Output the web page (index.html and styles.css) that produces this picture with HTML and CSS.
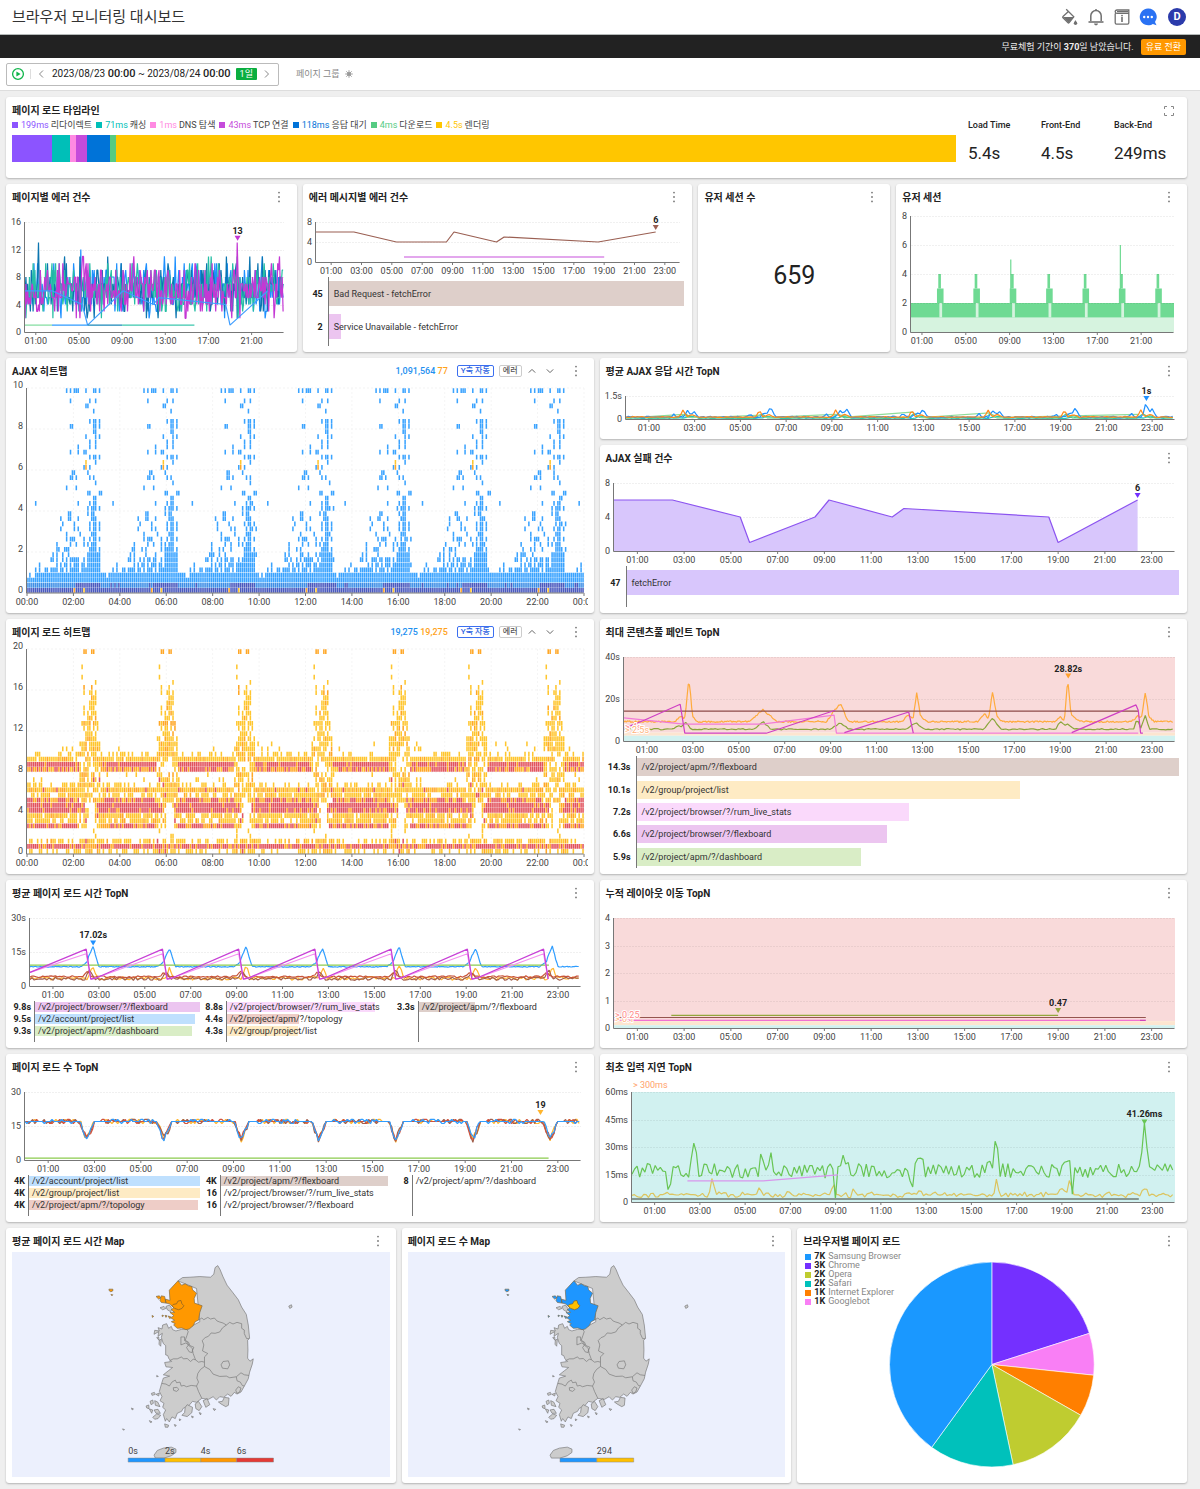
FILE: index.html
```html
<!DOCTYPE html>
<html lang="ko">
<head>
<meta charset="utf-8">
<meta name="viewport" content="width=device-width, initial-scale=1">
<title>브라우저 모니터링 대시보드</title>
<link rel="stylesheet" href="styles.css">
</head>
<body>
<svg class="defs" aria-hidden="true">
  <symbol id="kebab" viewBox="0 0 12 12"><circle cx="6" cy="1.6" r="0.9"/><circle cx="6" cy="6" r="0.9"/><circle cx="6" cy="10.4" r="0.9"/></symbol>
  <symbol id="up" viewBox="0 0 10 10"><path d="M1.8 6.6 5 3.4l3.2 3.2" fill="none" stroke="#666"/></symbol>
  <symbol id="down" viewBox="0 0 10 10"><path d="M1.8 3.4 5 6.6l3.2-3.2" fill="none" stroke="#666"/></symbol>
  <symbol id="korea" viewBox="36 80 1134 678">
    <g class="land">
      <path d="M534 167 548 157 570 156 600 154 632 156 642 147 646 127 654 121 661 133 670 155 682 180 700 203 716 224 726 246 740 268 746 300 750 340 744 346 745 375 744 400 751 409 761 402 758 418 750 442 746 462 733 486 724 502 712 508 704 503 694 515 684 508 672 518 660 516 650 526 640 516 626 524 606 521 590 533 578 530 566 544 550 551 545 560 532 566 526 582 516 577 508 592 500 582 496 590 490 570 497 556 488 548 492 536 480 528 486 516 478 500 485 476 490 460 509 454 490 450 505 438 518 428 498 426 494 413 515 410 507 402 503 392 497 390 497 362 490 356 484 338 487 325 474 334 476 320 462 328 464 316 478 318 474 308 486 312 488 300 500 296 506 310 514 304 518 314 528 318 545 313 560 312 600 290 590 190Z"/>
      <path d="M478 345 484 343 482 364 477 358ZM470 338 476 336 477 346ZM480 248 492 244 498 250 488 254ZM498 244 508 240 516 250 512 260 502 254ZM458 578 470 568 482 572 474 582 464 584ZM556 548 562 540 578 548 576 564 562 576 546 572 554 564ZM586 538 596 530 606 546 598 558 588 552ZM610 528 622 522 630 540 618 548ZM656 532 668 530 674 518 688 520 686 542 678 546 664 538ZM640 552 648 554 644 558ZM598 564 604 566 602 571ZM575 574 581 577 577 580ZM538 583 543 585 539 589ZM523 600 529 602 526 606ZM494 598 506 602 504 608 496 608ZM448 588 456 592 451 594ZM394 550 400 553 396 556ZM367 613 373 615 370 617ZM470 452 475 455 470 456ZM868 243 876 239 878 246 871 250ZM454 506 463 503 466 509 456 512ZM468 509 478 505 476 514ZM450 530 458 526 460 536 453 540ZM438 544 446 541 447 552 440 550ZM464 528 473 532 480 546 466 542ZM448 553 458 556 455 566ZM462 556 474 554 481 566 468 566Z"/>
      <path d="M462 692 472 678 490 671 514 668 528 674 528 684 514 694 492 701 466 701Z"/>
    </g>
    <path class="borders" d="M596 285 606 279 612 284 624 277 632 282 644 279 652 288 660 291 670 294 680 300 690 292 700 297 712 292 726 296 726 310 734 315 734 326 741 341 749 341M680 300 668 309 660 321 646 325 634 324 626 334 616 338 607 347 612 360 608 378 624 386 614 396 614 412 606 410 596 412 587 405 580 403 572 410 562 401 550 402 545 396 532 402 520 402 508 408M560 312 565 320 561 332 556 346 566 352 570 362 582 367 578 376 580 386 587 405M543 336 554 336 554 347 562 352 566 360 560 368 568 381 577 383 578 372 570 364 558 354 543 360ZM614 412 614 425 602 434 594 446 591 460 596 472 590 484 596 500 606 521M614 425 630 434 640 448 660 455 680 454 690 459 710 456 724 444 734 450 748 452M710 456 712 468 722 472 728 482 734 484M590 484 574 482 560 486 552 482 544 484 540 472 530 474 526 466 516 472 508 484 498 478 485 476M670 410 686 408 690 420 684 432 668 430 664 420ZM520 489 531 488 537 494 530 500 521 497ZM708 496 716 486 724 490 720 502 712 506Z"/>
    <path class="metro" d="M534 167 545 180 556 176 566 182 576 184 578 194 590 204 583 220 584 234 607 242 600 262 596 285 586 290 580 302 568 312 558 314 546 309 532 310 521 300 526 296 514 290 524 286 512 278 522 272 510 262 524 262 514 254 522 248 508 236 498 234 496 222 510 226 508 195ZM468 214 478 212 482 218 476 222ZM484 212 494 214 498 234 484 232 480 226ZM495 271 501 272 498 277ZM504 273 512 275 510 281ZM486 270 491 272 487 275ZM456 271 461 274 457 277ZM326 192 338 192 338 197 332 200 327 197ZM332 208 338 209 335 212Z"/>
    <path class="seoul" d="M520 238 530 236 534 228 543 226 546 236 552 242 546 250 536 254 524 250 516 242Z"/>
  </symbol>
</svg>

<header class="topbar">
  <h1>브라우저 모니터링 대시보드</h1>
  <nav class="topbar-tools" aria-label="도구">
    <button type="button" aria-label="테마"><svg viewBox="0 0 18 18"><path d="M5.2 1.2 12.8 8.8 8.2 14.6a1 1 0 0 1-1.4 0L2 9.8a1 1 0 0 1 0-1.4L7.4 3.5" fill="none" stroke="#707070" stroke-width="1.3"/><path d="M1.9 9h10.9L7.5 15Z" fill="#707070"/><path d="M14.4 12.2s1.8 2 1.8 3a1.7 1.7 0 0 1-3.4 0c0-1 1.6-3 1.6-3Z" fill="#707070"/></svg></button>
    <button type="button" aria-label="알림"><svg viewBox="0 0 18 18"><path d="M9 1v1.5M3.8 13V7.8a5.2 5.2 0 0 1 10.4 0V13" fill="none" stroke="#707070" stroke-width="1.5"/><path d="M1.5 14h15" stroke="#707070" stroke-width="1.6"/><path d="M7 15.6h4a2 1.8 0 0 1-4 0Z" fill="#707070"/></svg></button>
    <button type="button" aria-label="릴리스 노트"><svg viewBox="0 0 18 18"><path d="M2.2 5.5v9.3c0 .8.5 1.3 1.3 1.3h11c.8 0 1.3-.5 1.3-1.3V2H4C2.800 2 2.200 2.700 2.200 3.700S2.800 5.300 4 5.300h11.500M4 3.600h11" fill="none" stroke="#707070" stroke-width="1.3"/><path d="M9 9v5" stroke="#707070" stroke-width="1.600"/><circle cx="9" cy="7.600" r="0.900" fill="#707070"/></svg></button>
    <button type="button" aria-label="문의"><svg viewBox="0 0 18 18"><path d="M9 .5a8.400 8.400 0 1 0 4.800 15.400l3.700 1.400-1.500-3.400A8.400 8.400 0 0 0 9 .5Z" fill="#2a72f3"/><circle cx="5.200" cy="9" r="1.200" fill="#fff"/><circle cx="9" cy="9" r="1.200" fill="#fff"/><circle cx="12.800" cy="9" r="1.200" fill="#fff"/></svg></button>
    <button type="button" class="avatar">D</button>
  </nav>
</header>

<div class="notice">
  <p>무료체험 기간이 <b>370</b>일 남았습니다.</p>
  <button type="button">유료 전환</button>
</div>

<div class="toolbar">
  <div class="range">
    <button type="button" aria-label="실시간"><svg class="play" viewBox="0 0 14 14"><circle cx="7" cy="7" r="5.400" fill="none" stroke="#0fb54a" stroke-width="1.300"/><path d="M5.400 4.600 9.600 7l-4.200 2.400Z" fill="#0fb54a"/></svg></button>
    <span class="divider"></span>
    <button type="button" aria-label="이전"><svg class="step" viewBox="0 0 10 10"><path d="M7 1.500 3.500 5 7 8.500" fill="none" stroke="#888"/></svg></button>
    <span class="dates">2023/08/23 <b>00<i>:</i>00</b> ~ 2023/08/24 <b>00<i>:</i>00</b></span>
    <span class="span-badge">1일</span>
    <button type="button" aria-label="다음"><svg class="step" viewBox="0 0 10 10"><path d="M3 1.500 6.500 5 3 8.500" fill="none" stroke="#888"/></svg></button>
  </div>
  <button type="button" class="group-filter">페이지 그룹 <svg viewBox="0 0 10 10"><circle cx="5" cy="5" r="2" fill="#999"/><path d="M5 1.200v7.600M1.200 5h7.600M2.300 2.300l5.400 5.400M7.700 2.300 2.300 7.700" stroke="#999" stroke-width=".9"/></svg></button>
</div>

<main class="dashboard">
  <section class="panel w12 h1 timeline">
    <div class="timeline-main">
      <h2>페이지 로드 타임라인</h2>
      <ul class="timeline-legend">
        <li class="c-redirect"><b>199ms</b> 리다이렉트</li>
        <li class="c-cache"><b>71ms</b> 캐싱</li>
        <li class="c-dns"><b>1ms</b> DNS 탐색</li>
        <li class="c-tcp"><b>43ms</b> TCP 연결</li>
        <li class="c-wait"><b>118ms</b> 응답 대기</li>
        <li class="c-download"><b>4ms</b> 다운로드</li>
        <li class="c-render"><b>4.5s</b> 렌더링</li>
      </ul>
      <div class="timeline-bar">
        <span class="c-redirect" style="flex-grow:40"></span><span class="c-cache" style="flex-grow:18"></span><span class="c-dns" style="flex-grow:6"></span><span class="c-tcp" style="flex-grow:11"></span><span class="c-wait" style="flex-grow:23"></span><span class="c-download" style="flex-grow:6"></span><span class="c-render" style="flex-grow:839"></span>
      </div>
    </div>
    <dl class="stats">
      <div><dt>Load Time</dt><dd>5.4s</dd></div>
      <div><dt>Front-End</dt><dd>4.5s</dd></div>
      <div><dt>Back-End</dt><dd>249ms</dd></div>
    </dl>
    <button type="button" class="expand" aria-label="전체 화면"><svg viewBox="0 0 10 10"><path d="M.5 3V.5H3M7 .5h2.500V3M9.500 7v2.500H7M3 9.500H.5V7" fill="none" stroke="#888"/></svg></button>
  </section>

  <section class="panel w3 h2">
    <header><h2>페이지별 에러 건수</h2><button type="button" class="menu" aria-label="메뉴"><svg><use href="#kebab"/></svg></button></header>
    <div class="chart" data-chart="pageErrors"></div>
  </section>

  <section class="panel w4 h2">
    <header><h2>에러 메시지별 에러 건수</h2><button type="button" class="menu" aria-label="메뉴"><svg><use href="#kebab"/></svg></button></header>
    <div class="chart chart-short" data-chart="errorMessages"></div>
    <ul class="toplist toplist-large label-25">
      <li><b>45</b><div><span class="bar t-brown" style="width:100%"></span><span class="name">Bad Request - fetchError</span></div></li>
      <li><b>2</b><div><span class="bar t-purple" style="width:3.500%"></span><span class="name">Service Unavailable - fetchError</span></div></li>
    </ul>
  </section>

  <section class="panel w2 h2">
    <header><h2>유저 세션 수</h2><button type="button" class="menu" aria-label="메뉴"><svg><use href="#kebab"/></svg></button></header>
    <p class="big-number">659</p>
  </section>

  <section class="panel w3 h2">
    <header><h2>유저 세션</h2><button type="button" class="menu" aria-label="메뉴"><svg><use href="#kebab"/></svg></button></header>
    <div class="chart" data-chart="sessions"></div>
  </section>

  <section class="panel w6 h3">
    <header><h2>AJAX 히트맵</h2>
      <div class="heat-tools"><span class="hits">1,091,564 <em>77</em></span><button type="button" class="toggle on">Y축 자동</button><button type="button" class="toggle">에러</button><button type="button" class="arrow" aria-label="위로"><svg><use href="#up"/></svg></button><button type="button" class="arrow" aria-label="아래로"><svg><use href="#down"/></svg></button></div>
      <button type="button" class="menu" aria-label="메뉴"><svg><use href="#kebab"/></svg></button></header>
    <div class="chart chart-heat" data-chart="ajaxHeat"></div>
  </section>

  <section class="panel w6 h1">
    <header><h2>평균 AJAX 응답 시간 TopN</h2><button type="button" class="menu" aria-label="메뉴"><svg><use href="#kebab"/></svg></button></header>
    <div class="chart" data-chart="ajaxTime"></div>
  </section>

  <section class="panel w6 h2">
    <header><h2>AJAX 실패 건수</h2><button type="button" class="menu" aria-label="메뉴"><svg><use href="#kebab"/></svg></button></header>
    <div class="chart chart-mid" data-chart="ajaxFail"></div>
    <ul class="toplist toplist-large label-26">
      <li><b>47</b><div><span class="bar t-violet" style="width:100%"></span><span class="name">fetchError</span></div></li>
    </ul>
  </section>

  <section class="panel w6 h3">
    <header><h2>페이지 로드 히트맵</h2>
      <div class="heat-tools"><span class="hits">19,275 <em>19,275</em></span><button type="button" class="toggle on">Y축 자동</button><button type="button" class="toggle">에러</button><button type="button" class="arrow" aria-label="위로"><svg><use href="#up"/></svg></button><button type="button" class="arrow" aria-label="아래로"><svg><use href="#down"/></svg></button></div>
      <button type="button" class="menu" aria-label="메뉴"><svg><use href="#kebab"/></svg></button></header>
    <div class="chart chart-heat" data-chart="loadHeat"></div>
  </section>

  <section class="panel w6 h3">
    <header><h2>최대 콘텐츠풀 페인트 TopN</h2><button type="button" class="menu" aria-label="메뉴"><svg><use href="#kebab"/></svg></button></header>
    <div class="chart chart-tall" data-chart="lcp"></div>
    <ul class="toplist toplist-medium label-36">
      <li><b>14.3s</b><div><span class="bar t-brown" style="width:100%"></span><span class="name">/v2/project/apm/?/flexboard</span></div></li>
      <li><b>10.1s</b><div><span class="bar t-yellow" style="width:70.600%"></span><span class="name">/v2/group/project/list</span></div></li>
      <li><b>7.2s</b><div><span class="bar t-pink" style="width:50.200%"></span><span class="name">/v2/project/browser/?/rum_live_stats</span></div></li>
      <li><b>6.6s</b><div><span class="bar t-purple" style="width:46.100%"></span><span class="name">/v2/project/browser/?/flexboard</span></div></li>
      <li><b>5.9s</b><div><span class="bar t-green" style="width:41.400%"></span><span class="name">/v2/project/apm/?/dashboard</span></div></li>
    </ul>
  </section>

  <section class="panel w6 h2">
    <header><h2>평균 페이지 로드 시간 TopN</h2><button type="button" class="menu" aria-label="메뉴"><svg><use href="#kebab"/></svg></button></header>
    <div class="chart chart-mid" data-chart="loadTime"></div>
    <div class="toplist-columns">
      <ul class="toplist label-22">
        <li><b>9.8s</b><div><span class="bar t-purple" style="width:100%"></span><span class="name">/v2/project/browser/?/flexboard</span></div></li>
        <li><b>9.5s</b><div><span class="bar t-blue" style="width:97%"></span><span class="name">/v2/account/project/list</span></div></li>
        <li><b>9.3s</b><div><span class="bar t-green" style="width:95%"></span><span class="name">/v2/project/apm/?/dashboard</span></div></li>
      </ul>
      <ul class="toplist label-22">
        <li><b>8.8s</b><div><span class="bar t-pink" style="width:90%"></span><span class="name">/v2/project/browser/?/rum_live_stats</span></div></li>
        <li><b>4.4s</b><div><span class="bar t-red" style="width:44%"></span><span class="name">/v2/project/apm/?/topology</span></div></li>
        <li><b>4.3s</b><div><span class="bar t-yellow" style="width:43%"></span><span class="name">/v2/group/project/list</span></div></li>
      </ul>
      <ul class="toplist label-22">
        <li><b>3.3s</b><div><span class="bar t-brown" style="width:34%"></span><span class="name">/v2/project/apm/?/flexboard</span></div></li>
      </ul>
    </div>
  </section>

  <section class="panel w6 h2">
    <header><h2>누적 레이아웃 이동 TopN</h2><button type="button" class="menu" aria-label="메뉴"><svg><use href="#kebab"/></svg></button></header>
    <div class="chart" data-chart="cls"></div>
  </section>

  <section class="panel w6 h2">
    <header><h2>페이지 로드 수 TopN</h2><button type="button" class="menu" aria-label="메뉴"><svg><use href="#kebab"/></svg></button></header>
    <div class="chart chart-mid" data-chart="loadCount"></div>
    <div class="toplist-columns">
      <ul class="toplist label-16">
        <li><b>4K</b><div><span class="bar t-blue" style="width:100%"></span><span class="name">/v2/account/project/list</span></div></li>
        <li><b>4K</b><div><span class="bar t-yellow" style="width:100%"></span><span class="name">/v2/group/project/list</span></div></li>
        <li><b>4K</b><div><span class="bar t-red" style="width:99%"></span><span class="name">/v2/project/apm/?/topology</span></div></li>
      </ul>
      <ul class="toplist label-16">
        <li><b>4K</b><div><span class="bar t-brown" style="width:98%"></span><span class="name">/v2/project/apm/?/flexboard</span></div></li>
        <li><b>16</b><div><span class="name">/v2/project/browser/?/rum_live_stats</span></div></li>
        <li><b>16</b><div><span class="name">/v2/project/browser/?/flexboard</span></div></li>
      </ul>
      <ul class="toplist label-16">
        <li><b>8</b><div><span class="name">/v2/project/apm/?/dashboard</span></div></li>
      </ul>
    </div>
  </section>

  <section class="panel w6 h2">
    <header><h2>최초 입력 지연 TopN</h2><button type="button" class="menu" aria-label="메뉴"><svg><use href="#kebab"/></svg></button></header>
    <div class="chart" data-chart="fid"></div>
  </section>

  <section class="panel w4 h3">
    <header><h2>평균 페이지 로드 시간 Map</h2><button type="button" class="menu" aria-label="메뉴"><svg><use href="#kebab"/></svg></button></header>
    <div class="map map-time"><svg viewBox="0 0 378 226" role="img" aria-label="지역별 평균 페이지 로드 시간">
      <use href="#korea" width="378" height="226"/>
      <g stroke="#888" stroke-width=".5"><path d="M116 207h37v4h-37z" fill="#1e96ff"/><path d="M153 207h36v4h-36z" fill="#ffc000"/><path d="M189 207h36v4h-36z" fill="#ff9800"/><path d="M225 207h37v4h-37z" fill="#e53935"/></g>
      <text x="116" y="203">0s</text><text x="153" y="203">2s</text><text x="189" y="203">4s</text><text x="225" y="203">6s</text>
    </svg></div>
  </section>

  <section class="panel w4 h3">
    <header><h2>페이지 로드 수 Map</h2><button type="button" class="menu" aria-label="메뉴"><svg><use href="#kebab"/></svg></button></header>
    <div class="map map-count"><svg viewBox="0 0 378 226" role="img" aria-label="지역별 페이지 로드 수">
      <use href="#korea" width="378" height="226"/>
      <g stroke="#888" stroke-width=".5"><path d="M152 207h37v4h-37z" fill="#1e96ff"/><path d="M189 207h37v4h-37z" fill="#ffc000"/></g>
      <text x="189" y="203">294</text>
    </svg></div>
  </section>

  <section class="panel w4 h3">
    <header><h2>브라우저별 페이지 로드</h2><button type="button" class="menu" aria-label="메뉴"><svg><use href="#kebab"/></svg></button></header>
    <div class="pie">
      <ul>
        <li class="p-blue"><b>7K</b> Samsung Browser</li>
        <li class="p-violet"><b>3K</b> Chrome</li>
        <li class="p-lime"><b>2K</b> Opera</li>
        <li class="p-teal"><b>2K</b> Safari</li>
        <li class="p-orange"><b>1K</b> Internet Explorer</li>
        <li class="p-pink"><b>1K</b> Googlebot</li>
      </ul>
      <svg viewBox="0 0 390 231" role="img" aria-label="브라우저별 페이지 로드" id="pie"></svg>
    </div>
  </section>
</main>
<script src="charts.js"></script>
</body>
</html>
```

FILE: styles.css
```css
* { box-sizing: border-box; }

body {
  margin: 0;
  background: #efefef;
  color: #222;
  font: 9px/12px Roboto, "Noto Sans CJK KR", sans-serif;
}

h1, h2, p, ul, dl, dd { margin: 0; padding: 0; }
ul { list-style: none; }
button { margin: 0; padding: 0; border: 0; background: none; color: inherit; font: inherit; cursor: pointer; }
svg { display: block; }
.defs { width: 0; height: 0; position: absolute; }

/* Top bar */
.topbar {
  display: flex;
  align-items: center;
  justify-content: space-between;
  height: 35px;
  padding: 0 14px 0 12px;
  background: #fff;
  border-bottom: 1px solid #b5bab9;
}
.topbar h1 { font-size: 15px; line-height: 20px; font-weight: 400; color: #333; }
.topbar-tools { display: flex; align-items: center; gap: 8px; }
.topbar-tools svg { width: 18px; height: 18px; }
.avatar {
  width: 18px;
  height: 18px;
  margin-left: 3px;
  border-radius: 50%;
  background: #2b3bab;
  color: #fff;
  font-size: 11px;
  font-weight: 700;
}

.notice {
  display: flex;
  align-items: center;
  justify-content: flex-end;
  gap: 7px;
  height: 23px;
  padding: 0 14px;
  background: #222;
  color: #eee;
}
.notice button { padding: 2px 5px; border-radius: 2px; background: #ff9800; color: #fff; }

.toolbar {
  display: flex;
  align-items: center;
  gap: 17px;
  height: 33px;
  padding: 0 6px;
  background: #fff;
  border-bottom: 1px solid #ddd;
}
.range {
  display: flex;
  align-items: center;
  gap: 5px;
  height: 23px;
  padding: 0 6px 0 4px;
  border: 1px solid #bbb;
  border-radius: 2px;
}
.play { width: 14px; height: 14px; }
.step { width: 10px; height: 10px; }
.divider { width: 1px; height: 10px; background: #ddd; }
.dates { padding-left: 1px; font-size: 10px; white-space: nowrap; }
.dates b { font-size: 11px; font-weight: 500; }
.dates i { font-style: normal; font-weight: 400; }
.span-badge { padding: 0 4px; border-radius: 1px; background: #0aae3f; color: #fff; }
.group-filter { display: flex; align-items: center; gap: 4px; color: #888; }
.group-filter svg { width: 10px; height: 10px; }

/* Dashboard grid */
.dashboard {
  display: grid;
  grid-template-columns: repeat(12, minmax(0, 1fr));
  grid-auto-rows: 81px;
  grid-auto-flow: dense;
  gap: 6px;
  padding: 6px 13px 6px 6px;
}
.w2 { grid-column: span 2; }
.w3 { grid-column: span 3; }
.w4 { grid-column: span 4; }
.w6 { grid-column: span 6; }
.w12 { grid-column: span 12; }
.h1 { grid-row: span 1; }
.h2 { grid-row: span 2; }
.h3 { grid-row: span 3; }

.panel {
  display: flex;
  flex-direction: column;
  min-width: 0;
  background: #fff;
  border-radius: 3px;
  box-shadow: 0 1px 2px rgba(0, 0, 0, .25);
}
.panel > header { display: flex; align-items: center; flex: none; height: 24px; padding: 2px 12px 0 6px; }
.panel h2 { flex: 1; padding-top: 1px; font-size: 10px; line-height: 12px; font-weight: 700; white-space: nowrap; }
.menu svg { width: 12px; height: 12px; fill: #777; }

/* Page load timeline */
.panel.timeline { flex-direction: row; position: relative; }
.timeline-main { flex: 1; padding: 7px 12px 0 6px; }
.timeline-legend { display: flex; gap: 4px; margin-top: 2px; }
.timeline-legend li { display: flex; align-items: center; gap: 2px; color: #444; white-space: nowrap; }
.timeline-legend li::before { content: ""; width: 6px; height: 6px; margin-right: 1px; background: var(--c); }
.timeline-legend b { color: var(--c); font-weight: 400; }
.timeline-bar { display: flex; height: 27px; margin-top: 4px; }
.timeline-bar span { background: var(--c); }
.c-redirect { --c: #8c54ff; }
.c-cache { --c: #00bfb8; }
.c-dns { --c: #ff8ae2; }
.c-tcp { --c: #c54bdb; }
.c-wait { --c: #0073d8; }
.c-download { --c: #56cb83; }
.c-render { --c: #ffc600; }
.stats { display: grid; grid-template-columns: repeat(3, 73px); padding-top: 22px; }
.stats dt { font-weight: 500; }
.stats dd { margin-top: 12px; font-size: 17px; line-height: 20px; }
.expand { position: absolute; top: 9px; right: 13px; }
.expand svg { width: 10px; height: 10px; }

/* Charts */
.chart { flex: 1; min-height: 0; overflow: hidden; }
.chart-short { flex: none; height: 69px; }
.chart-mid { flex: none; height: 97px; }
.chart-tall { flex: none; height: 113px; }
.chart-heat { margin-right: 6px; overflow-x: clip; overflow-y: visible; }
.chart-heat svg { overflow: visible; }
.chart text { font-size: 9px; fill: #444; }
.chart .peak { font-weight: 700; fill: #222; }
.chart .limit { stroke: #fff; stroke-width: 2px; paint-order: stroke; }

.big-number { flex: 1; display: grid; place-content: center; padding-bottom: 8px; font-size: 25px; line-height: 30px; }

/* Ranked bars */
.toplist { position: relative; }
.toplist::before { content: ""; position: absolute; top: 0; bottom: 0; left: var(--label); width: 1px; background: #777; }
.label-16 { --label: 16px; }
.label-22 { --label: 22px; }
.label-25 { --label: 25px; }
.label-26 { --label: 26px; }
.label-36 { --label: 36px; }
.toplist li { display: grid; grid-template-columns: var(--label) minmax(0, 1fr); align-items: center; height: 12px; padding-right: 4px; }
.toplist b { padding-right: 3px; text-align: right; }
.toplist div { display: grid; align-items: center; padding-left: 1px; }
.toplist .bar { grid-area: 1 / 1; height: 10px; }
.toplist .name { grid-area: 1 / 1; padding-left: 3px; color: #333; white-space: nowrap; }
.toplist-columns { flex: 1; display: grid; grid-template-columns: repeat(3, minmax(0, 1fr)); padding: 0 6px; margin-bottom: 6px; }
.toplist-large, .toplist-medium { flex: 1; margin-bottom: 6px; }
.toplist-medium { display: grid; grid-template-rows: repeat(5, 1fr); }
.toplist-large li { height: 33px; padding-right: 8px; }
.toplist-medium li { height: auto; padding-right: 8px; }
.toplist-large b, .toplist-medium b { padding-right: 5px; }
.toplist-large .name, .toplist-medium .name { padding-left: 5px; }
.toplist-large .bar { height: 25px; }
.toplist-medium .bar { height: 18px; }
.t-brown { background: #decfca; }
.t-purple { background: #ecc5f0; }
.t-pink { background: #fad9fb; }
.t-yellow { background: #feebc4; }
.t-green { background: #d9edc6; }
.t-blue { background: #bfe0fe; }
.t-red { background: #eecdc7; }
.t-violet { background: #d8c6fc; }

/* Heatmap controls */
.heat-tools { display: flex; align-items: center; gap: 5px; margin-right: 12px; }
.hits { margin-right: 4px; color: #1e90f0; font-weight: 500; }
.hits em { color: #ffa21a; font-style: normal; }
.toggle { padding: 0 3px; border: 1px solid #ccc; border-radius: 2px; color: #555; font-size: 8px; line-height: 10px; font-weight: 500; }
.toggle.on { border-color: #3b6ff0; color: #2b5fe0; }
.arrow { margin-right: 3px; }
.arrow svg { width: 10px; height: 10px; }

/* Maps */
.map { flex: 1; min-height: 0; margin: 0 6px 6px; background: #ecf0fd; }
.map svg { width: 100%; height: 100%; }
.map text { font-size: 9px; fill: #444; }
.map-time { --metro: #ff9800; --seoul: #ff9800; }
.map-count { --metro: #1e96ff; --seoul: #ffc000; }
.land { fill: #ccc; stroke: #777; stroke-width: 2px; }
.borders { fill: none; stroke: #777; stroke-width: 2px; }
.metro { fill: var(--metro); stroke: #7a6a4a; stroke-width: 2px; }
.seoul { fill: var(--seoul); stroke: #7a5a2a; stroke-width: 2px; }

/* Browser share */
.pie { flex: 1; min-height: 0; display: grid; }
.pie ul { grid-area: 1 / 1; padding-left: 8px; color: #888; line-height: 9px; }
.pie li { display: flex; align-items: center; gap: 3px; }
.pie li::before { content: ""; width: 6px; height: 6px; background: var(--c); }
.pie b { color: #222; }
.pie svg { grid-area: 1 / 1; width: 100%; height: 100%; }
.p-blue { --c: #1a98ff; }
.p-violet { --c: #7430ff; }
.p-lime { --c: #bfcc30; }
.p-teal { --c: #00c1bb; }
.p-orange { --c: #ff7f00; }
.p-pink { --c: #f97ff5; }
```

FILE: charts.js
```js
const CYCLE = 10 / 3;
const cycles = [0, 1, 2, 3, 4, 5, 6];

function random(seed) {
  let s = seed;
  return () => {
    s = (s * 1664525 + 1013904223) % 4294967296;
    return s / 4294967296;
  };
}

/* A noisy series over 24 hours; peaks are [hour, value, half width]. */
function noisy(seed, base, amp, peaks = [], n = 240, power = 1) {
  const rnd = random(seed);
  const points = [];
  for (let i = 0; i <= n; i++) {
    const h = (i * 23.9) / n;
    const r = rnd() * 2 - 1;
    let v = base + amp * Math.sign(r) * Math.abs(r) ** power;
    for (const [at, top, w] of peaks) {
      const d = Math.abs(h - at);
      if (d < w) v += (top - base) * (1 - d / w);
    }
    points.push([h, v]);
  }
  return points;
}

/* Whole-number error counts. */
function counts(seed, extra) {
  const rnd = random(seed);
  const points = [];
  for (let i = 0; i <= 287; i++) {
    const h = i / 12;
    let v = Math.round(6.2 + (rnd() + rnd() + rnd() - 1.5) * 3.8);
    v = Math.max(2, Math.min(11, v));
    for (const [at, top] of extra) if (Math.abs(h - at) < 0.042) v = top;
    points.push([h, v]);
  }
  return points;
}

function dips(seed) {
  const rnd = random(seed);
  const points = [];
  for (let i = 0; i <= 287; i++) {
    const h = i / 12;
    const p = (h - 2.65 + 24 * CYCLE) % CYCLE;
    const d = Math.min(p, (CYCLE - p) * 1.3);
    const r = rnd();
    let v = 17 + (p > 0.6 && p < 2.9 && r < 0.2 ? 0.9 : 0) - (p > 0.6 && r > 0.85 ? 0.9 : 0);
    if (d < 0.34) v = 8.8 + d * 23 + rnd() * 3 - 1.5;
    points.push([h, v]);
  }
  return points;
}

const peaksAt = (start, tops, w) => cycles.map((k) => [start + k * CYCLE, tops[k % tops.length], w]);
const saw = (from, top, low) => {
  const pts = [[0, from]];
  cycles.forEach((k) => {
    const h = 2.45 + k * 3.32;
    pts.push([h, top], [h + 0.2, low]);
    if (k < 6) pts.push([h + 0.45, low + 0.6]);
  });
  return pts;
};

const PINK = '#f9dada', SAND = '#fde5d0', AQUA = '#d1f1f0';
const steps = [[0, 6], [2.5, 6], [5.3, 4], [5.8, 1], [9.1, 6], [11.9, 4], [12.4, 5], [18.6, 4], [19, 1], [22.5, 6]];

const charts = {
  pageErrors: {
    l: 19, r: 13, t: 14, h: 110, max: 16, ticks: [0, 4, 8, 12, 16], step: 4,
    lines: [
      ['#1e90ff', counts(11, [[5.2, 12], [12.9, 11], [22, 11]])],
      ['#0b75b0', counts(23, [[1.25, 13], [3.7, 11], [7.7, 11], [20.8, 11]])],
      ['#26bfa5', counts(37, [[17, 11], [2.5, 10]])],
      ['#c437d4', counts(53, [[19.7, 13], [10.1, 11], [5.4, 11], [23.6, 11]])],
      ['#3d9dff', steps],
      ['#7fdc9d', [[0, 1], [2.5, 1]]], ['#2f9bff', [[2.5, 1], [5.8, 1]]], ['#1a87b8', [[5.8, 1], [9, 1]]], ['#3cc7ae', [[9, 1], [15.7, 1]]],
    ],
    peak: [19.7, 13, '13', '#c437d4'],
  },
  errorMessages: {
    l: 13, r: 13, t: 14, h: 40, max: 8, ticks: [0, 4, 8], step: 2,
    lines: [
      ['#9a5f52', [[0, 6], [2.5, 6], [5.3, 4], [8.6, 4], [9.1, 6], [11.9, 4], [12.4, 5], [18.6, 4], [22.4, 6]]],
      ['#c850dc', [[5.8, 1], [19, 1]]],
    ],
    peak: [22.4, 6, '6', '#9a5f52'],
  },
  sessions: {
    l: 15, r: 13, t: 8, h: 116, max: 8, ticks: [0, 2, 4, 6, 8], step: 4,
    rects: [[0, 24, 0, 1, '#d6f3df'], [0, 24, 1, 2, '#6fda93']].concat(
      cycles.flatMap((k) => {
        const h = 2.37 + k * 3.32;
        return [
          [h, h + 0.6, 2, 3, '#6fda93'],
          [h + 0.12, h + 0.36, 3, 4, '#6fda93'],
          [h + 0.22, h + 0.47, 1, 2, '#d6f3df'],
        ];
      }),
      [[9.05, 9.16, 2, 5, '#6fda93'], [19.05, 19.16, 2, 6, '#6fda93']]
    ),
  },
  ajaxTime: {
    l: 26, r: 13, t: 14, h: 23, max: 1.5, ticks: [0, 1.5], unit: 's', step: 2,
    lines: [
      ['#26c8b8', noisy(5, 0.06, 0.03, peaksAt(2.9, [0.2], 0.3))],
      ['#56cb83', noisy(6, 0.08, 0.02, peaksAt(2.6, [0.35], 0.25))],
      ['#8edc9a', [[0, 0.05], [2.5, 0.3], [2.7, 0.1], [3.5, 0.1], [5.9, 0.25], [6.1, 0.1], [9.1, 0.3], [9.9, 0.15], [12.5, 0.45], [12.9, 0.1], [15.9, 0.4], [16.2, 0.1], [22.4, 0.3]]],
      ['#1e90ff', noisy(7, 0.13, 0.05, peaksAt(2.7, [0.55, 0.4], 0.2).concat(peaksAt(2.98, [0.5, 0.8, 0.7, 0.6], 0.2), peaksAt(2.1, [0.35], 0.12), [[22.75, 0.65, 0.15]]))],
      ['#ff8a1a', noisy(8, 0.13, 0.02, peaksAt(2.5, [0.6], 0.15).concat(peaksAt(2.9, [0.3], 0.25)))],
    ],
    peak: [22.75, 1.05, '1s', '#1e90ff'],
  },
  ajaxFail: {
    l: 14, r: 13, t: 14, h: 68, max: 8, ticks: [0, 4, 8], step: 2,
    area: ['#d8c6fc', [[0, 6], [2.5, 6], [5.4, 4], [5.8, 1], [8.6, 4], [9.2, 6], [11.9, 4], [12.4, 5], [18.6, 4], [19, 1], [22.4, 6]]],
    lines: [['#8c54f0', [[0, 6], [2.5, 6], [5.4, 4], [5.8, 1], [8.6, 4], [9.2, 6], [11.9, 4], [12.4, 5], [18.6, 4], [19, 1], [22.4, 6]]]],
    peak: [22.4, 6, '6', '#7430ff'],
  },
  lcp: {
    l: 24, r: 13, t: 14, h: 84, max: 40, ticks: [0, 20, 40], unit: 's', step: 2,
    rects: [[0, 24, 4, 40, PINK], [0, 24, 2.5, 4, SAND], [0, 24, 0, 2.5, AQUA]],
    lines: [
      ['#8aa63a', noisy(61, 5.6, 0.3, [[2.7, 9, 0.2], [2.4, 7.5, 0.3], [6.05, 9.2, 0.35], [9.4, 8.6, 0.4], [12.7, 8.8, 0.4], [16.05, 11, 0.35], [19, 9.5, 0.2], [19.3, 8, 0.3], [22.35, 11, 0.15], [22.7, 12, 0.2]])],
      ['#ffab3d', noisy(62, 9.2, 0.4, [[2.5, 12, 0.3], [2.82, 27, 0.16], [2.9, 13, 0.3], [6.05, 15, 0.6], [9.1, 13, 0.3], [9.42, 18, 0.35], [12.4, 12.5, 0.3], [12.75, 22, 0.16], [12.9, 12, 0.3], [15.7, 13, 0.3], [16.05, 22, 0.18], [16.2, 12, 0.3], [19, 12, 0.2], [19.33, 28, 0.15], [19.5, 12, 0.4], [22.4, 12, 0.3], [22.7, 21, 0.16], [22.8, 12, 0.3]], 478)],
      ['#8d4a48', [[0, 14.2], [22.4, 14.2]]],
      ['#f27bd8', [[0, 11], [2.6, 8], [6, 8], [9.15, 12.3], [9.25, 3.7], [22.4, 3.7]]],
      ['#cf3fc4', [[0, 6], [0.9, 10], [2.45, 17.5], [2.65, 3.7], [6.2, 3.7], [9.2, 14.6]]],
      ['#cf3fc4', [[9.6, 4], [12.4, 13.8], [12.6, 3.7]]],
      ['#cf3fc4', [[19.5, 4], [22.3, 17.2], [22.4, 14.5], [22.5, 3.7], [22.6, 3.7]]],
    ],
    limits: [[4, '> 4s', '#ff8a8a'], [2.5, '> 2.5s', '#ffb27a']],
    peak: [19.35, 28.8, '28.82s', '#ffa02e'],
  },
  loadTime: {
    l: 24, r: 13, t: 14, h: 68, max: 30, ticks: [0, 15, 30], unit: 's', step: 2,
    lines: [
      ['#ffb52e', noisy(71, 3.4, 0.8, peaksAt(2.75, [9, 8], 0.2), 260)],
      ['#a3604d', noisy(72, 3.2, 0.7, peaksAt(2.6, [7, 6], 0.2), 260)],
      ['#c8543a', noisy(73, 4.1, 0.4, peaksAt(2.5, [6.5, 6], 0.2), 260)],
      ['#2f9dff', noisy(74, 8.5, 0.2, peaksAt(2.75, [16.5, 15.5], 0.26).concat(peaksAt(2.55, [11], 0.35)), 478)],
      ['#8bcb4e', [[0, 9.2], [22.6, 9.2]]],
      ['#f491f0', saw(6, 14.2, 3)],
      ['#c73fd6', saw(6, 16.3, 3)],
    ],
    peak: [2.75, 17, '17.02s', '#1e90ff'],
  },
  cls: {
    l: 14, r: 13, t: 14, h: 110, max: 4, ticks: [0, 1, 2, 3, 4], step: 2,
    rects: [[0, 24, 0.25, 4, PINK], [0, 24, 0.1, 0.25, SAND], [0, 24, 0, 0.1, AQUA]],
    lines: [
      ['#95554f', [[0, 0.38], [22.75, 0.38]]],
      ['#93a63c', [[2.45, 0.46], [19, 0.46]]],
      ['#f270d2', [[0, 0.28], [22.5, 0.28]]],
      ['#cc32b8', [[22.5, 0.28], [22.75, 0.28]]],
    ],
    limits: [[0.1, '> 0.1', '#ffb27a'], [0.25, '> 0.25', '#ff8a8a']],
    peak: [19, 0.47, '0.47', '#93a63c'],
  },
  loadCount: {
    l: 19, r: 13, t: 14, h: 68, max: 30, ticks: [0, 15, 30], step: 2,
    lines: [
      ['#ffb52e', dips(81)],
      ['#a3604d', dips(82)],
      ['#d0523c', dips(83)],
      ['#2f9dff', dips(84)],
      ['#8bcb4e', [[0, 0.8], [22.6, 0.8]]],
    ],
    peak: [22.25, 19, '19', '#ffb52e'],
  },
  fid: {
    l: 32, r: 13, t: 14, h: 110, max: 60, ticks: [0, 15, 30, 45, 60], unit: 'ms', step: 2,
    rects: [[0, 24, 0, 60, AQUA]],
    lines: [
      ['#dcc45e', noisy(91, 4, 1.6, [[3.55, 15, 0.14], [5.65, 10, 0.15], [6.9, 7, 0.1], [8.9, 12, 0.12], [9.8, 9, 0.12], [12.7, 8, 0.2], [16.1, 14, 0.12], [19, 9, 0.2], [19.35, 12, 0.15], [22.7, 7.500, 0.2]], 230, 1.8)],
      ['#68c554', noisy(92, 17, 4, [[1.65, 5, 0.12], [2.75, 31, 0.18], [5.75, 30, 0.12], [6.1, 27, 0.12], [9, 4, 0.12], [9.4, 24, 0.2], [12.35, 5, 0.12], [12.7, 27, 0.25], [16.1, 40, 0.16], [15.9, 22, 0.25], [19.25, 25, 0.2], [19.45, 6, 0.1], [22.65, 46, 0.16]], 210)],
      ['#d896ec', [[2.45, 11.5], [5.8, 11.5], [9.1, 14.8]]],
      ['#869893', [[0, 1.6], [22.4, 1.6]], 2],
    ],
    note: '> 300ms',
    peak: [22.65, 41.2, '41.26ms', '#68c554'],
  },
};

/* Heatmaps: 288 five-minute columns by 40 rows; a pattern repeats every 40 columns. */
const AJAX_ROWS = {
  0: [20, 22, 24, 25, 26, 30, 34, 35, 37], 2: [22, 32, 35], 3: [30, 31], 4: [34], 6: [32, 34, 35, 37],
  7: [22, 23, 34, 35, 37], 8: [34, 35], 9: [30, 35, 37], 10: [32, 35], 11: [26, 32, 35], 12: [22, 26, 29, 30],
  13: [32, 34, 35, 37], 14: [35], 15: [29, 32], 16: [23, 24, 31], 17: [22, 23, 25, 32, 34], 18: [35], 19: [20, 25],
  20: [31, 32, 37, 38], 21: [34, 35], 22: [4, 26, 32, 34, 35], 23: [31, 33, 34, 35, 37], 24: [21, 22, 31, 33, 34],
  25: [17, 21, 22, 26, 33, 34, 35], 26: [18, 24, 32, 34, 35, 37], 27: [17, 24, 26, 32, 34, 35, 37],
  28: [20, 27, 33, 34, 35], 29: [20, 22, 23, 24, 29, 32, 34, 35, 37], 30: [15, 22, 25, 29, 31, 33, 34, 35],
  31: [15, 19, 21, 32, 33, 34, 35, 37], 32: [13, 15, 21, 31, 32, 33, 34, 35, 36, 37],
  33: [12, 13, 15, 18, 20, 22, 23, 25, 26, 29, 31, 32, 33, 34, 35, 36, 37],
  34: [6, 15, 17, 19, 20, 22, 24, 25, 26, 28, 29, 31, 32, 33, 34, 35, 36, 37],
  35: [4, 6, 9, 10, 12, 13, 14, 15, 17, 18, 20, 22, 23, 24, 26, 28, 29, 30, 31, 32, 33, 34, 35, 36, 37],
};

function ajaxCells() {
  const rnd = random(4);
  const cells = [];
  for (let c = 0; c < 288; c++) {
    const p = c % 40;
    const k = Math.floor(c / 40);
    for (let r = 0; r < 36; r++) {
      const row = AJAX_ROWS[r] || [];
      const shift = k > 1 && r > 15 && (r * 7 + k * 3) % 5 === 0 ? 1 : 0;
      if (row.includes(p - shift)) cells.push([c, r, 'b']);
      else if (r > 30 && p > 13 && p < 37 && rnd() < 0.08) cells.push([c, r, 'b']);
    }
    if (!(p < 5 && rnd() < 0.25)) cells.push([c, 36, 'b']);
    cells.push([c, 37, 'b']);
    cells.push([c, 38, (p > 24 && p < 38) || rnd() < 0.1 ? 'i' : 'd']);
    cells.push([c, 39, p === 24 ? 'o' : p === 29 ? 'y' : 'i']);
    if (p === 30) cells.push([c, 14, 'y'], [c, 15, 'o']);
  }
  return cells;
}

/* Share of filled, red and orange cells for each row outside the bursts. */
const LOAD_ROWS = {
  18: [0.03, 0, 0], 19: [0.05, 0, 0], 20: [0.35, 0, 0], 21: [0.96, 0, 0.25], 22: [1, 0.85, 0.15], 23: [1, 0.5, 0.45],
  24: [0.04, 0, 0], 25: [0.08, 0, 0], 26: [0.4, 0, 0], 27: [1, 0.08, 0.4], 28: [0.65, 0, 0.1], 29: [1, 0.5, 0.4],
  30: [1, 0.9, 0.1], 31: [1, 0.85, 0.15], 32: [0.85, 0, 0.12], 33: [0.78, 0, 0.12], 34: [1, 0.6, 0.4],
  37: [0.55, 0, 0.1], 38: [1, 0.75, 0.25], 39: [0.4, 0, 0],
};
const BURST_ROWS = {
  0: [29, 30, 33, 34], 3: [28], 5: [28], 6: [35], 7: [29, 33], 8: [29, 32, 33, 35], 9: [33, 34, 35], 10: [32, 33, 34, 35],
  11: [29, 32, 33, 34], 12: [29, 31, 33, 34, 35], 13: [31, 32, 33, 35], 14: [28, 29, 30, 31, 32, 34, 35, 36],
  15: [29, 31, 32, 34, 36], 16: [30, 31, 32, 33, 35],
};

function loadCells() {
  const rnd = random(9);
  const cells = [];
  for (let c = 0; c < 288; c++) {
    const p = c % 40;
    const burst = p >= 27 && p <= 37;
    for (let r = 0; r < 40; r++) {
      if (BURST_ROWS[r]) {
        if (BURST_ROWS[r].includes(p)) cells.push([c, r, r === 0 || rnd() < 0.12 ? 'o' : 'y']);
        continue;
      }
      const x = rnd();
      const z = rnd();
      if (burst && r > 16) {
        if (r === 35 || r === 36) {
          if ((p === 34 || p === 35 || p === 28) && x < 0.5) cells.push([c, r, 'y']);
          continue;
        }
        if (r > 21 && r < 24 && p > 30 && p < 35) { if (x < 0.4) cells.push([c, r, 'y']); continue; }
        if (r > 29 && r < 35 && p > 31 && p < 35) continue;
        if (r > 29 && r < 32 && (p < 30 || p > 35)) { cells.push([c, r, z < 0.6 ? 'r' : 'o']); continue; }
        if (r === 38) { cells.push([c, r, z < 0.6 ? 'r' : 'o']); continue; }
        if (x < (r < 21 ? 0.75 : 0.7)) cells.push([c, r, z < 0.06 && r > 24 ? 'r' : z < 0.22 ? 'o' : 'y']);
        continue;
      }
      const row = LOAD_ROWS[r];
      if (row && x < row[0]) cells.push([c, r, z < row[1] ? 'r' : z < row[1] + row[2] ? 'o' : 'y']);
    }
  }
  return cells;
}

const HEAT_COLORS = { b: '#3aa3ff', d: '#3f8fe6', i: '#4b5abf', o: '#ffa726', y: '#ffc62e', r: '#e2535e' };
const heatmaps = {
  ajaxHeat: { max: 10, gap: 2, cells: ajaxCells() },
  loadHeat: { max: 20, gap: 4, cells: loadCells() },
};

const hour = (h) => String(h % 24).padStart(2, '0') + ':00';

function drawHeat(el, cfg) {
  const W = el.clientWidth, H = el.clientHeight;
  const l = 21, t = 6, h = 205, w = W - l - 4;
  const cw = w / 288, ch = h / 40;
  let out = '';
  for (let i = 0; i < 12; i++) {
    const x = l + (w * (2 * i + 2)) / 24;
    out += `<path d="M${x} ${t}v${h}" stroke="#f5f5f5" stroke-dasharray="2 2"/>`;
  }
  for (let v = cfg.gap; v <= cfg.max; v += cfg.gap) out += `<path d="M${l} ${t + h - (v / cfg.max) * h}h${w}" stroke="#f3f3f3" stroke-dasharray="2 2"/>`;
  const paths = {};
  for (const [c, r, k] of cfg.cells) {
    paths[k] = (paths[k] || '') + `M${(l + c * cw + 0.2).toFixed(2)} ${(t + r * ch + 0.2).toFixed(2)}h${(cw - 0.4).toFixed(2)}v${(ch - 0.4).toFixed(2)}h-${(cw - 0.4).toFixed(2)}z`;
  }
  for (const k in paths) out += `<path d="${paths[k]}" fill="${HEAT_COLORS[k]}"/>`;
  out += `<path d="M${l - 0.5} ${t}v${h}h${w}" fill="none" stroke="#777"/>`;
  for (let v = 0; v <= cfg.max; v += cfg.gap) out += `<text x="${l - 4}" y="${t + h - (v / cfg.max) * h}" text-anchor="end">${v}</text>`;
  for (let i = 0; i <= 24; i += 2) {
    const x = l + (w * i) / 24;
    out += `<path d="M${x} ${t + h}v3" stroke="#777"/><text x="${x}" y="${t + h + 12}" text-anchor="middle">${hour(i)}</text>`;
  }
  el.innerHTML = `<svg width="${W}" height="${H}" role="img">${out}</svg>`;
}

function drawChart(el, cfg) {
  const W = el.clientWidth, H = el.clientHeight;
  const { l, t, h, max } = cfg;
  const w = W - l - cfg.r;
  const X = (v) => l + (v / 24) * w;
  const Y = (v) => t + h - (v / max) * h;
  const line = (pts) => pts.map(([a, b]) => `${X(a).toFixed(1)},${Y(b).toFixed(1)}`).join(' ');
  let out = '';
  for (const [a, b, lo, hi, color] of cfg.rects || []) out += `<rect x="${X(a)}" y="${Y(hi)}" width="${X(b) - X(a)}" height="${Y(lo) - Y(hi)}" fill="${color}"/>`;
  for (const v of cfg.ticks) {
    out += `<path d="M${l} ${Math.round(Y(v)) + 0.5}h${w}" stroke="#000" stroke-opacity=".06" stroke-dasharray="2 1"/>`;
    out += `<text x="${l - 4}" y="${Y(v) + 3}" text-anchor="end">${v ? v + (cfg.unit || '') : 0}</text>`;
  }
  if (cfg.area) {
    const pts = cfg.area[1];
    out += `<polygon points="${X(0)},${Y(0)} ${line(pts)} ${X(pts[pts.length - 1][0])},${Y(0)}" fill="${cfg.area[0]}"/>`;
  }
  for (const [color, pts, width] of cfg.lines || []) out += `<polyline points="${line(pts)}" fill="none" stroke="${color}" stroke-width="${width || 1.2}" stroke-linejoin="bevel"/>`;
  out += `<path d="M${l - 0.5} ${t}v${h + 0.5}h${w}" fill="none" stroke="#777"/>`;
  for (let i = 1; i < 24; i += cfg.step) out += `<path d="M${X(i)} ${t + h}v3" stroke="#777"/><text x="${X(i)}" y="${t + h + 12}" text-anchor="middle">${hour(i)}</text>`;
  for (const [v, label, color] of cfg.limits || []) out += `<text class="limit" style="fill:${color}" x="${l + 1}" y="${Y(v) - 3}">${label}</text>`;
  if (cfg.note) out += `<text style="fill:#ffa36b" x="${l + 1}" y="${t - 4}">${cfg.note}</text>`;
  if (cfg.peak) {
    const [a, b, label, color] = cfg.peak;
    out += `<path d="M${X(a) - 3} ${Y(b) - 7}h6l-3 5z" fill="${color}"/><text class="peak" x="${X(a)}" y="${Y(b) - 9}" text-anchor="middle">${label}</text>`;
  }
  el.innerHTML = `<svg width="${W}" height="${H}" role="img">${out}</svg>`;
}

function drawPie() {
  const slices = [[0, 72.3, '#7430ff'], [72.3, 96, '#f97ff5'], [96, 119.7, '#ff7f00'], [119.7, 168, '#bfcc30'], [168, 216, '#00c1bb'], [216, 360, '#1a98ff']];
  const at = (deg) => {
    const a = (deg * Math.PI) / 180;
    return `${(195 + 102.5 * Math.sin(a)).toFixed(1)} ${(112.5 - 102.5 * Math.cos(a)).toFixed(1)}`;
  };
  document.getElementById('pie').innerHTML = slices.map(([a, b, color]) => `<path d="M195 112.5 ${at(a)}A102.5 102.5 0 0 1 ${at(b)}Z" fill="${color}" stroke="#fff" stroke-width=".6"/>`).join('');
}

function draw() {
  document.querySelectorAll('.chart').forEach((el) => {
    const name = el.dataset.chart;
    if (heatmaps[name]) drawHeat(el, heatmaps[name]);
    else drawChart(el, charts[name]);
  });
}

drawPie();
draw();
window.addEventListener('resize', draw);
```
